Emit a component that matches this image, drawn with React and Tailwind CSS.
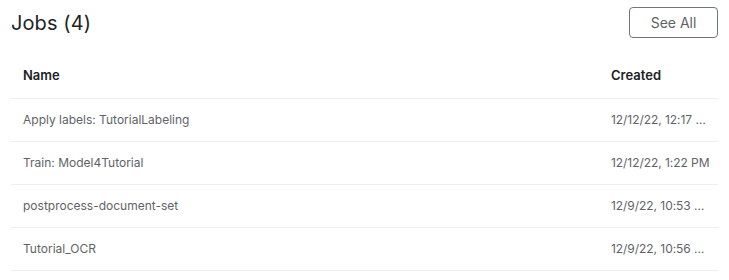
import React from 'react';

const JOBS = [
  { name: 'Apply labels: TutorialLabeling', created: '12/12/22, 12:17 PM' },
  { name: 'Train: Model4Tutorial', created: '12/12/22, 1:22 PM' },
  { name: 'postprocess-document-set', created: '12/9/22, 10:53 AM' },
  { name: 'Tutorial_OCR', created: '12/9/22, 10:56 AM' },
];

export default function App() {
  return (
    <div className="w-[729px] h-[280px] bg-white px-[11px] pt-[7px] font-['Inter','Liberation_Sans',sans-serif] overflow-hidden">
      {/* Header */}
      <div className="flex items-center justify-between h-[31px]">
        <h2 className="text-[20px] leading-none text-[#1f2328] tracking-[0.1px]">Jobs (4)</h2>
        <button className="w-[89px] h-[31px] rounded-[4px] border border-[#70757a] text-[14px] text-[#5f6368]">
          See All
        </button>
      </div>

      {/* Table */}
      <table className="w-full table-fixed mt-[16px] border-collapse">
        <thead>
          <tr className="h-[44px] border-b border-[#eeeeee]">
            <th className="text-left pl-[12px] text-[13px] font-semibold text-[#202124]">Name</th>
            <th className="w-[119px] text-left pl-[12px] text-[13px] font-semibold text-[#202124]">Created</th>
          </tr>
        </thead>
        <tbody>
          {JOBS.map((job) => (
            <tr key={job.name} className="h-[43px] border-b border-[#eeeeee]">
              <td className="pl-[12px] text-[12px] text-[#5f6368] truncate">{job.name}</td>
              <td className="pl-[12px] pr-[8px] text-[12px] tracking-[-0.05px] text-[#5f6368] truncate">{job.created}</td>
            </tr>
          ))}
        </tbody>
      </table>
    </div>
  );
}
